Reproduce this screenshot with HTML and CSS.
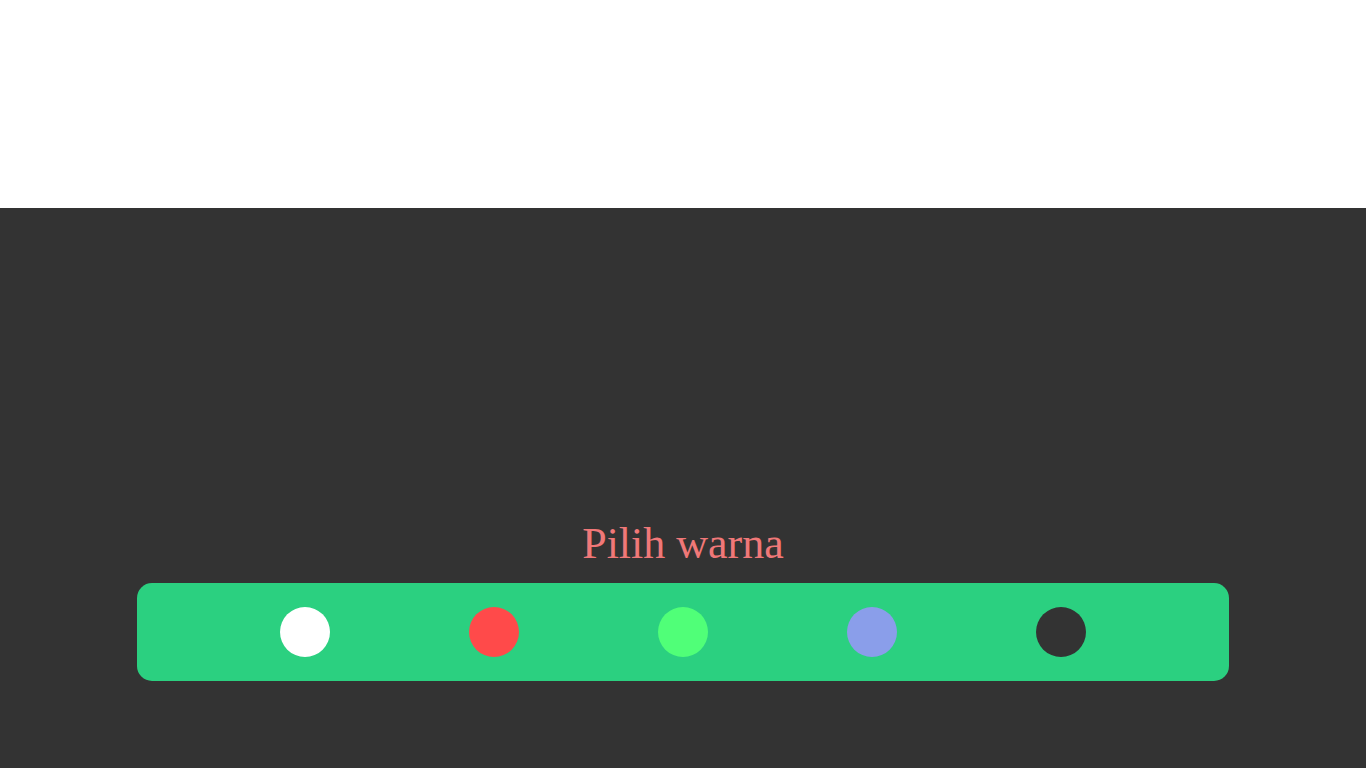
FILE: index.html
```html
<!DOCTYPE html>
<html>
<head>
<meta charset="utf-8">
<link rel="stylesheet" href="styles.css">
</head>
<body>
<div class="top"></div>
<main class="stage">
  <h1 class="title">Pilih warna</h1>
  <div class="palette">
    <span class="dot dot-white"></span>
    <span class="dot dot-red"></span>
    <span class="dot dot-green"></span>
    <span class="dot dot-blue"></span>
    <span class="dot dot-dark"></span>
  </div>
</main>
</body>
</html>
```
FILE: styles.css
```css
html, body {
  margin: 0;
  padding: 0;
  height: 100%;
}
body {
  display: flex;
  flex-direction: column;
  font-family: "Liberation Serif", "Times New Roman", serif;
  background: #333333;
}
.top {
  height: 208px;
  background: #ffffff;
  flex: none;
}
.stage {
  flex: 1;
  display: flex;
  flex-direction: column;
  align-items: center;
  justify-content: flex-end;
  padding-bottom: 87px;
}
.title {
  margin: 0 0 14px 0;
  font-size: 44px;
  font-weight: normal;
  color: #f07878;
  line-height: normal;
}
.palette {
  width: 1092px;
  box-sizing: border-box;
  height: 98px;
  background: #2bd080;
  border-radius: 15px;
  display: flex;
  align-items: center;
  justify-content: center;
  gap: 139px;
}
.dot {
  width: 50px;
  height: 50px;
  border-radius: 50%;
  flex: none;
}
.dot-white { background: #ffffff; }
.dot-red { background: #ff4a4a; }
.dot-green { background: #50ff78; }
.dot-blue { background: #8a9eea; }
.dot-dark { background: #333333; }
```
